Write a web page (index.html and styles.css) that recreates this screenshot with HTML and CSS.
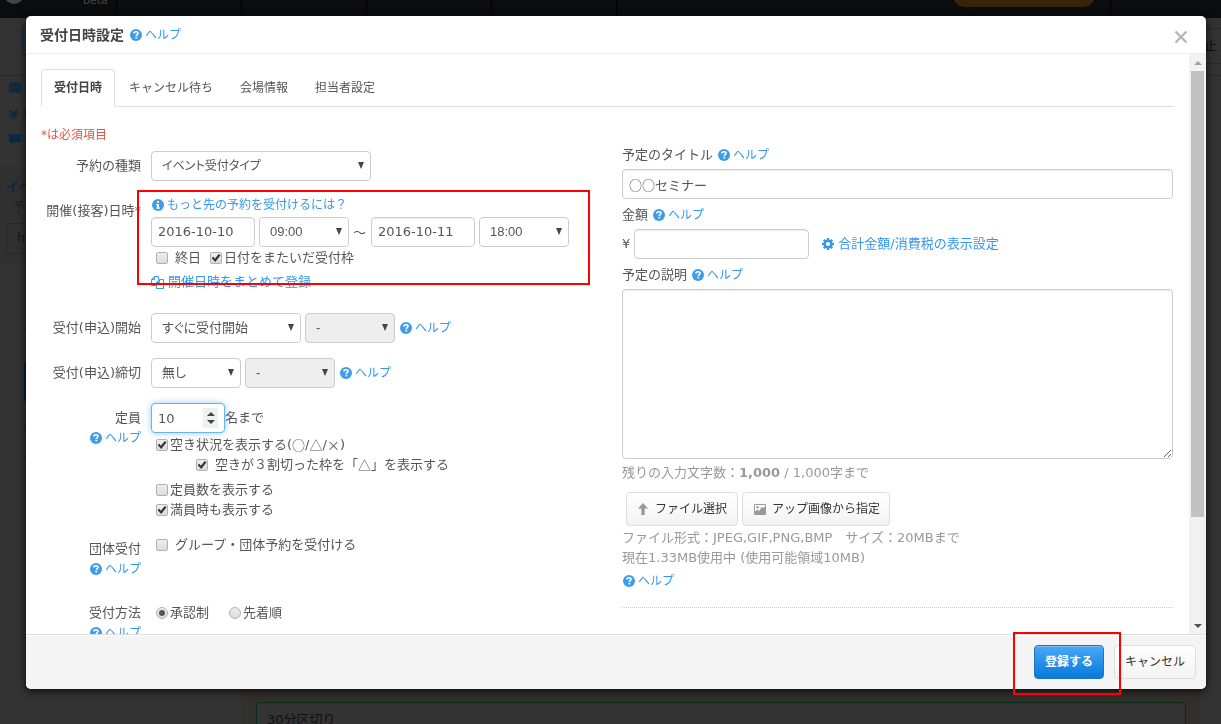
FILE: index.html
```html
<!DOCTYPE html>
<html lang="ja">
<head>
<meta charset="utf-8">
<title>受付日時設定</title>
<link rel="stylesheet" href="styles.css">
</head>
<body>
<svg class="defs" aria-hidden="true">
  <symbol id="i-help" viewBox="0 0 12 12"><circle cx="6" cy="6" r="6" fill="#409ce6"/><path d="M4 4.6V4.3C4 3.2 4.8 2.7 6 2.7s2 .6 2 1.6C8 5.6 6.3 5.5 6.3 6.9" fill="none" stroke="#fff" stroke-width="1.6"/><rect x="5.4" y="7.8" width="1.8" height="1.6" fill="#fff"/></symbol>
  <symbol id="i-info" viewBox="0 0 12 12"><circle cx="6" cy="6" r="6" fill="#409ce6"/><path d="M5 2.2h2V4H5zM4.2 5H7v3.4h1v1.4H4.2V8.4H5V6.3h-.8z" fill="#fff"/></symbol>
  <symbol id="i-gear" viewBox="0 0 12 12"><circle cx="6" cy="6" r="3.3" fill="none" stroke="#3497f0" stroke-width="2.4"/><path d="M6 0v2.4M6 9.6V12M0 6h2.4M9.6 6H12M1.8 1.8l1.6 1.6M8.6 8.6l1.6 1.6M10.2 1.8L8.6 3.4M3.4 8.6l-1.6 1.6" stroke="#3497f0" stroke-width="2.3"/></symbol>
  <symbol id="i-copy" viewBox="0 0 14 13"><path d="M5.5 9.5h-5v-6l3-3h4v3M.5 3.500h3v-3M5.500 6.500l3-3h4v9h-7zM5.500 6.500h3v-3" fill="none" stroke="#3497f0"/></symbol>
  <symbol id="i-up" viewBox="0 0 10 12"><path d="M5 0l5 5.5H6.7V12H3.3V5.5H0z" fill="#999"/></symbol>
  <symbol id="i-image" viewBox="0 0 12 11"><path d="M.5.5h11v10H.5z" fill="#fff" stroke="#999"/><path d="M1 10V7.500l2.500-2 1.500 1.500 3-4.500 1 1.500 2-1.500V10z" fill="#999"/><circle cx="3.500" cy="3.200" r="1.200" fill="#999"/></symbol>
</svg>

<div class="page">
  <div class="topbar">
    <div class="brand"><svg class="logo" viewBox="0 0 20 20"><circle cx="10" cy="10" r="10" fill="#454545"/><path d="M1 14q10 2 18-9" stroke="#0a0c0e" stroke-width="2" fill="none"/></svg><span>beta</span></div>
    <div class="cell"></div><div class="cell"></div><div class="cell"></div><div class="cell"></div><div class="cell wide"><span class="pill"></span></div>
  </div>
  <div class="toolbar"><span class="tool"></span><span class="stop">止</span></div>
  <div class="side">
    <div class="side-item"><svg viewBox="0 0 12 10"><path d="M0 0h12v10H0z" fill="#0d2840"/><path d="M0 1l6 5 6-5M0 9l4-4M12 9L8 5" stroke="#333" fill="none"/></svg></div>
    <div class="side-item"><b>¥</b> 料</div>
    <div class="side-item"><svg viewBox="0 0 12 11"><path d="M0 0h12v8H5l-3 3V8H0z" fill="#0d2840"/></svg></div>
    <div class="side-group"><b>イベ</b><span>予約</span><i>ht</i></div>
    <div class="side-list"><span>一</span><em></em><span>ホー</span><span>も</span></div>
  </div>
  <div class="back-panel"><div class="back-field">30分区切り</div></div>
</div>

<div class="modal" role="dialog" aria-labelledby="title">
  <header class="modal-head">
    <h1 id="title">受付日時設定</h1>
    <a class="help" href="#"><svg><use href="#i-help"/></svg>ヘルプ</a>
    <button class="close" aria-label="閉じる"><svg viewBox="0 0 14 14"><path d="M1.500 1.500l11 11M12.500 1.500l-11 11" stroke="#b5b5b5" stroke-width="2.400"/></svg></button>
  </header>

  <div class="modal-main">
    <div class="content">
      <nav class="tabs"><a class="active" href="#">受付日時</a><a href="#">キャンセル待ち</a><a href="#">会場情報</a><a href="#">担当者設定</a></nav>
      <div class="columns">
        <form class="left">
          <p class="required">*は必須項目</p>
          <div class="row type">
            <label class="label center" for="kind">予約の種類</label>
            <div><span class="select w220"><select id="kind"><option>イベント受付タイプ</option></select></span></div>
          </div>
          <div class="row dates">
            <div class="label center">開催(接客)日時<span class="star">*</span></div>
            <div>
              <a class="line" href="#"><svg><use href="#i-info"/></svg>もっと先の予約を受付けるには？</a>
              <div class="controls datetime">
                <input class="text date" type="text" value="2016-10-10" aria-label="開始日">
                <span class="select w90"><select aria-label="開始時刻"><option>09:00</option></select></span>
                <span class="tilde">～</span>
                <input class="text date" type="text" value="2016-10-11" aria-label="終了日">
                <span class="select w90"><select aria-label="終了時刻"><option>18:00</option></select></span>
              </div>
              <div class="checks"><label class="loose"><input type="checkbox">終日</label><label><input type="checkbox" checked>日付をまたいだ受付枠</label></div>
              <a class="line bulk" href="#"><svg class="copy"><use href="#i-copy"/></svg>開催日時をまとめて登録</a>
            </div>
            <span class="marker marker-dates"></span>
          </div>
          <div class="row">
            <label class="label center" for="open">受付(申込)開始</label>
            <div class="controls"><span class="select w150"><select id="open"><option>すぐに受付開始</option></select></span><span class="select w90"><select disabled aria-label="開始詳細"><option>-</option></select></span><a class="help" href="#"><svg><use href="#i-help"/></svg>ヘルプ</a></div>
          </div>
          <div class="row">
            <label class="label center" for="end">受付(申込)締切</label>
            <div class="controls"><span class="select w90"><select id="end"><option>無し</option></select></span><span class="select w90"><select disabled aria-label="締切詳細"><option>-</option></select></span><a class="help" href="#"><svg><use href="#i-help"/></svg>ヘルプ</a></div>
          </div>
          <div class="row">
            <div class="label center"><label for="cap">定員</label><a class="help" href="#"><svg><use href="#i-help"/></svg>ヘルプ</a></div>
            <div>
              <div class="capacity"><span class="number"><input class="text" id="cap" type="number" value="10"><span class="spin"></span></span>名まで</div>
              <div class="checks"><label><input type="checkbox" checked>空き状況を表示する(<span class="cjk">○</span>/<span class="cjk">△</span>/<span class="cjk">×</span>)</label></div>
              <div class="checks sub"><label class="loose"><input type="checkbox" checked>空きが３割切った枠を「<span class="cjk">△</span>」を表示する</label></div>
              <div class="checks"><label><input type="checkbox">定員数を表示する</label></div>
              <div class="checks"><label><input type="checkbox" checked>満員時も表示する</label></div>
            </div>
          </div>
          <div class="row group">
            <div class="label">団体受付<a class="help" href="#"><svg><use href="#i-help"/></svg>ヘルプ</a></div>
            <div class="checks"><label class="loose"><input type="checkbox">グループ・団体予約を受付ける</label></div>
          </div>
          <div class="row">
            <div class="label">受付方法<a class="help" href="#"><svg><use href="#i-help"/></svg>ヘルプ</a></div>
            <div class="checks radios"><label><input type="radio" name="m" checked>承認制</label><label><input type="radio" name="m">先着順</label></div>
          </div>
        </form>

        <div class="right">
          <div class="caption"><label for="name">予定のタイトル</label><a class="help" href="#"><svg><use href="#i-help"/></svg>ヘルプ</a></div>
          <input class="text full cjk" id="name" type="text" value="○○セミナー">
          <div class="caption"><label for="price">金額</label><a class="help" href="#"><svg><use href="#i-help"/></svg>ヘルプ</a></div>
          <div class="price"><span>¥</span><input class="text" id="price" type="text"><a class="tax" href="#"><svg><use href="#i-gear"/></svg>合計金額/消費税の表示設定</a></div>
          <div class="caption"><label for="desc">予定の説明</label><a class="help" href="#"><svg><use href="#i-help"/></svg>ヘルプ</a></div>
          <textarea class="text full" id="desc"></textarea>
          <p class="muted count">残りの入力文字数：<b>1,000</b> / 1,000字まで</p>
          <div class="files"><button class="btn"><svg class="up"><use href="#i-up"/></svg>ファイル選択</button><button class="btn"><svg class="img"><use href="#i-image"/></svg>アップ画像から指定</button></div>
          <p class="muted">ファイル形式：JPEG,GIF,PNG,BMP　サイズ：20MBまで</p>
          <p class="muted">現在1.33MB使用中 (使用可能領域10MB)</p>
          <a class="help last" href="#"><svg><use href="#i-help"/></svg>ヘルプ</a>
          <hr>
        </div>
      </div>
    </div>
    <div class="scroll" aria-hidden="true"><span class="arrow up"></span><span class="thumb"></span><span class="arrow down"></span></div>
  </div>

  <footer class="modal-foot">
    <div class="submit"><button class="btn primary">登録する</button><span class="marker marker-submit"></span></div>
    <button class="btn cancel">キャンセル</button>
  </footer>
</div>
</body>
</html>
```

FILE: styles.css
```css
* { box-sizing: border-box; }
body { margin: 0; height: 100vh; overflow: hidden; background: #333; color: #555; font: 13px/20px "DejaVu Sans", "Noto Sans CJK JP", sans-serif; }
a { color: #3497f0; text-decoration: none; }
p, h1 { margin: 0; }
input, select, textarea, button { font: inherit; color: inherit; margin: 0; }
.defs { position: absolute; width: 0; height: 0; }
.cjk { font-family: "Noto Sans CJK JP", sans-serif; }

/* dimmed page behind the dialog */
.page { display: flex; flex-direction: column; height: 100vh; color: #111; }
.topbar { display: flex; height: 18px; background: #0a0c0e; overflow: hidden; }
.brand { width: 117px; display: flex; align-items: flex-start; gap: 59px; color: #444; font-size: 11px; border-right: 1px solid #000; }
.brand span { line-height: 20px; margin-top: -9px; }
.logo { width: 20px; height: 20px; margin: -16px 0 0 4px; }
.cell { width: 125px; border-right: 1px solid #000; }
.cell.wide { flex: 1; max-width: 494px; display: flex; justify-content: flex-end; }
.pill { width: 144px; height: 27px; margin: -20px 14px 0 0; border-radius: 14px; background: #382406; }
.toolbar { display: flex; justify-content: space-between; height: 58px; border-bottom: 1px solid #282828; }
.tool { width: 40px; height: 34px; margin: 5px 0 0 22px; border: 1px solid #0d2840; border-radius: 5px; }
.stop { height: 36px; margin-top: 10px; padding: 7px 4px 0 0; border-top: 1px solid #282828; border-bottom: 1px solid #282828; }
.side { flex: 1; width: 60px; color: #0d2840; }
.side-item { height: 26px; padding: 3px 9px; line-height: 20px; white-space: nowrap; overflow: hidden; }
.side-item svg { width: 12px; height: 11px; }
.side-group { display: flex; flex-direction: column; margin-top: 13px; padding: 10px 6px; background: #303030; white-space: nowrap; }
.side-group span { padding-left: 6px; }
.side-group i { font-style: normal; height: 31px; margin-top: 6px; padding: 4px 10px; border: 1px solid #272727; border-radius: 4px; color: #161616; }
.side-list { display: flex; flex-direction: column; gap: 8px; padding: 56px 0 0 22px; white-space: nowrap; }
.side-list em { height: 43px; margin: 12px 0 8px 2px; background: #04213d; border-radius: 5px; }
.back-panel { height: 35px; margin: 0 20px 0 241px; padding: 13px 15px 0; background: #32302d; overflow: hidden; }
.back-field { height: 40px; padding: 7px 10px; border: 1px solid #08281a; border-radius: 4px; background: #333; }

/* dialog */
.modal { position: fixed; inset: 16px 15px 35px 26px; display: flex; flex-direction: column; background: #fff; border-radius: 5px; box-shadow: 0 2px 8px rgba(0, 0, 0, .8); }
.modal-head { display: flex; align-items: center; gap: 6px; height: 38px; padding: 0 18px 0 14px; border-bottom: 1px solid #eee; }
h1 { font-size: 14px; line-height: 20px; color: #444; }
.close { margin-left: auto; margin-top: 5px; padding: 0; border: 0; background: none; display: flex; }
.close svg { width: 14px; height: 14px; }
.help { display: inline-flex; align-items: center; gap: 3px; font-size: 12px; line-height: 20px; }
.help svg, .line svg, .tax svg { width: 12px; height: 12px; flex: none; }
.modal-main { display: flex; flex: 1; min-height: 0; }
.content { flex: 1; min-width: 0; padding: 15px; overflow: hidden; }
.tabs { display: flex; gap: 1px; height: 38px; border-bottom: 1px solid #ddd; font-size: 12px; }
.tabs a { height: 38px; padding: 8px 12px; border: 1px solid transparent; color: #555; }
.tabs .active { background: #fff; border-color: #ddd #ddd #fff; border-radius: 4px 4px 0 0; font-weight: bold; color: #444; }
.columns { display: grid; grid-template-columns: 571px 1fr; gap: 10px; padding-top: 18px; }
.required { margin-bottom: 6px; color: #e8553e; font-size: 12px; }
.row { position: relative; display: grid; grid-template-columns: 100px 1fr; gap: 10px; margin-bottom: 15px; }
.row.type { margin-bottom: 14px; }
.row.dates { margin-bottom: 21px; }
.row.group { margin-bottom: 24px; }
.label { display: flex; flex-direction: column; align-items: flex-end; text-align: right; white-space: nowrap; }
.label.center { padding-top: 5px; }
.row.dates .label { flex-direction: row; justify-content: flex-end; align-items: flex-start; padding-top: 6px; }
.star { color: #e8553e; }
.row.group .label { padding-top: 4px; }
.line { display: flex; align-items: center; gap: 3px; padding-left: 1px; font-size: 12px; }
.bulk { margin-top: 4px; padding: 0; font-size: 13px; }
.line .copy { width: 14px; height: 13px; }
.controls { display: flex; align-items: center; gap: 4px; }
.controls .help { margin-left: 1px; }
.datetime { height: 33px; }
.tilde { width: 14px; font-family: "Noto Sans CJK JP", sans-serif; }
.text { height: 30px; padding: 4px 6px; border: 1px solid #ccc; border-radius: 4px; background: #fff; box-shadow: inset 0 1px 1px rgba(0, 0, 0, .08); outline: 0; }
.date { width: 104px; }
.select { position: relative; display: inline-block; height: 30px; }
.select select { appearance: none; width: 100%; height: 30px; padding: 0 20px 0 10px; border: 1px solid #ccc; border-radius: 4px; background: #fff; font-family: "Liberation Sans", "Noto Sans CJK JP", sans-serif; font-feature-settings: "palt"; opacity: 1; }
.select.w220 select { font-size: 12px; }
.select select:disabled { background: #eee; }
.select::after { content: ""; position: absolute; right: 7px; top: 11px; border: solid transparent; border-width: 7px 3px 0; border-top-color: #444; }
.w220 { width: 220px; }
.w150 { width: 150px; }
.w90 { width: 90px; }
.checks { display: flex; align-items: center; gap: 9px; height: 20px; padding-left: 5px; white-space: nowrap; }
.checks label { display: inline-flex; align-items: center; }
.checks input { appearance: none; display: grid; place-items: center; width: 12px; height: 12px; margin: 0 2px 0 0; border: 1px solid #b0b0b0; border-radius: 2px; background: linear-gradient(#eee, #dcdcdc); }
.checks .loose input { margin-right: 7px; }
.checks input[type=checkbox]:checked::before { content: ""; width: 9px; height: 8px; background: #333; clip-path: polygon(0 50%, 20% 35%, 38% 60%, 80% 0, 100% 15%, 42% 100%); }
.checks input[type=radio] { border-radius: 50%; }
.checks input[type=radio]:checked::before { content: ""; width: 6px; height: 6px; border-radius: 50%; background: #555; }
.radios { gap: 20px; }
.sub { padding-left: 45px; margin-bottom: 5px; }
.capacity { display: flex; align-items: center; margin-bottom: 2px; }
.number { position: relative; width: 74px; height: 30px; }
.number input { width: 74px; border-color: #66b5f0; box-shadow: 0 0 6px rgba(82, 168, 236, .6); appearance: textfield; }
.number input::-webkit-inner-spin-button { display: none; }
.spin { position: absolute; right: 7px; top: 5px; width: 15px; height: 20px; background: #f0f0f0; }
.spin::before, .spin::after { content: ""; position: absolute; left: 4px; border: solid transparent; }
.spin::before { top: 4px; border-width: 0 4px 4px; border-bottom-color: #444; }
.spin::after { bottom: 4px; border-width: 4px 4px 0; border-top-color: #444; }
.right { padding: 20px 1px 0 0; }
.caption { display: flex; gap: 5px; margin-bottom: 4px; }
.full { display: block; width: 100%; margin-bottom: 6px; }
.price { display: flex; align-items: center; gap: 4px; margin-bottom: 6px; }
.price .text { width: 175px; }
.tax { display: flex; align-items: center; gap: 4px; margin-left: 9px; }
textarea.full { height: 170px; margin-bottom: 4px; resize: vertical; }
.muted { color: #999; white-space: nowrap; }
.files { display: flex; gap: 4px; padding: 9px 4px 2px; }
.btn { display: inline-flex; align-items: center; justify-content: center; gap: 7px; height: 34px; padding: 0 9px; border: 1px solid #ddd; border-radius: 4px; background: linear-gradient(#fff, #f3f3f3); color: #333; font-size: 12px; white-space: nowrap; }
.files .btn { padding: 0 10px 0 11px; }
.files .btn + .btn { gap: 6px; padding: 0 9px 0 11px; }
.btn.cancel { padding: 0 10px; }
.btn .up { width: 10px; height: 12px; }
.btn .img { width: 12px; height: 11px; }
.last { display: flex; margin-top: 3px; padding-left: 1px; }
hr { margin: 16px 0 0; border: 0; border-top: 1px dotted #ccc; }
.scroll { display: flex; flex-direction: column; align-items: center; width: 17px; background: #f1f1f1; }
.thumb { flex: 446; width: 13px; background: #c1c1c1; }
.scroll::after { content: ""; flex: 100; order: 1; }
.arrow { width: 8px; height: 17px; display: flex; align-items: center; }
.arrow::before { content: ""; border: solid transparent; }
.arrow.up::before { border-width: 0 4px 4px; border-bottom-color: #a3a3a3; }
.arrow.down { order: 2; }
.arrow.down::before { border-width: 4px 4px 0; border-top-color: #505050; }
.modal-foot { display: flex; justify-content: flex-end; gap: 10px; padding: 10px; border-top: 1px solid #ddd; border-radius: 0 0 5px 5px; background: #f4f4f4; box-shadow: inset 0 1px 0 #fff; }
.submit { position: relative; display: flex; }
.primary { padding: 0 10px; border-color: #1b74bd; background: linear-gradient(#49a8f8, #0679db); box-shadow: inset 0 1px 0 #7cc0fa; color: #fff; font-weight: bold; }
.marker { position: absolute; border: 2px solid #f00; pointer-events: none; }
.marker-dates { left: 96px; top: -5px; width: 453px; height: 95px; }
.marker-submit { left: -21px; top: -13px; width: 108px; height: 63px; z-index: 1; }
```
